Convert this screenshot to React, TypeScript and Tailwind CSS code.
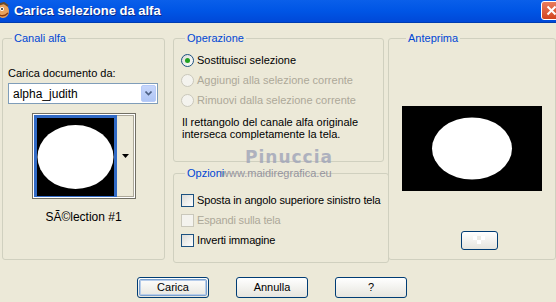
import { ReactNode } from 'react';

const Group = ({ title, className, children }: { title: string; className: string; children: ReactNode }) => (
  <fieldset className={`border border-[#D0D0BF] rounded-[3px] ${className}`}>
    <legend className="ml-[4px] px-[2px] text-[#0046D5] leading-[14px]">{title}</legend>
    {children}
  </fieldset>
);

const Radio = ({ label, checked, disabled }: { label: string; checked?: boolean; disabled?: boolean }) => (
  <div className="flex items-center h-[20px] whitespace-nowrap">
    <span
      className={`w-[13px] h-[13px] rounded-full border flex items-center justify-center ${
        disabled ? 'border-[#CAC8BB] bg-[#F4F3EE]' : 'border-[#1C5180] bg-gradient-to-br from-[#DCDCD7] to-white'
      }`}
    >
      {checked && <span className="w-[5px] h-[5px] rounded-full bg-[#21A121]" />}
    </span>
    <span className={`ml-[3px] ${disabled ? 'text-[#ACA899]' : 'text-black'}`}>{label}</span>
  </div>
);

const Check = ({ label, disabled }: { label: string; disabled?: boolean }) => (
  <div className="flex items-center h-[20px] whitespace-nowrap">
    <span
      className={`w-[13px] h-[13px] shrink-0 border ${
        disabled ? 'border-[#CAC8BB] bg-[#F4F3EE]' : 'border-[#1C5180] bg-gradient-to-br from-[#DCDCD7] to-white'
      }`}
    />
    <span className={`ml-[3px] tracking-[-0.15px] ${disabled ? 'text-[#ACA899]' : 'text-black'}`}>{label}</span>
  </div>
);

const XpButton = ({ label, focused }: { label: string; focused?: boolean }) => (
  <button className="w-[72px] h-[21px] rounded-[3px] border border-[#003C74] bg-gradient-to-b from-white to-[#E6E5DE] p-[1px]">
    <span
      className={`flex items-center justify-center w-full h-full rounded-[2px] ${
        focused ? 'border border-[#7DA2CE] shadow-[inset_0_0_0_1px_#B6CCEA]' : ''
      }`}
    >
      {label}
    </span>
  </button>
);

const Ellipse = ({ w, h, rx, ry }: { w: number; h: number; rx: number; ry: number }) => (
  <svg width={w} height={h} viewBox={`0 0 ${w} ${h}`} className="block">
    <rect width={w} height={h} fill="#000" />
    <ellipse cx={w / 2} cy={h / 2} rx={rx} ry={ry} fill="#fff" />
  </svg>
);

export default function App() {
  return (
    <div className="relative w-[556px] h-[302px] overflow-hidden bg-[#ECE9D8] text-[11px] text-black font-['Liberation_Sans',Arial,sans-serif]">
      {/* title bar */}
      <div className="h-[23px] flex items-center bg-gradient-to-b from-[#0A5FEA] via-[#0055E5] to-[#0048D8] border-b border-[#003CB0]">
        <svg width="12" height="18" viewBox="0 0 12 18" className="ml-[-2px]">
          <ellipse cx="5" cy="9" rx="6" ry="7" fill="#E9A25C" />
          <ellipse cx="4" cy="7" rx="2" ry="2" fill="#fff" />
          <circle cx="4" cy="7" r="1" fill="#222" />
          <path d="M0 12 Q5 16 10 11" stroke="#8A3A10" strokeWidth="1.5" fill="none" />
          <path d="M-1 3 L6 1 L10 4" stroke="#6B4A2A" strokeWidth="2" fill="none" />
        </svg>
        <span className="ml-[4px] text-white font-bold text-[13px] [text-shadow:1px_1px_0_#0A2A8A]">
          Carica selezione da alfa
        </span>
        <div className="ml-auto mr-[-6px] w-[21px] h-[19px] mt-[-2px] rounded-[3px] border border-white bg-gradient-to-b from-[#E97B5C] to-[#D2431C] flex items-center justify-center">
          <svg width="11" height="11" viewBox="0 0 11 11">
            <path d="M1.5 1.5 L9.5 9.5 M9.5 1.5 L1.5 9.5" stroke="#fff" strokeWidth="2" />
          </svg>
        </div>
      </div>

      {/* groups */}
      <div className="flex pt-[8px] pl-[2px]">
        <Group title="Canali alfa" className="w-[164px] h-[229px] px-[5px]">
          <div className="mt-[21px] leading-[14px]">Carica documento da:</div>
          <div className="mt-[3px] w-[150px] h-[21px] border border-[#7F9DB9] bg-white flex items-center">
            <span className="ml-[4px] flex-1 text-[12px]">alpha_judith</span>
            <span className="w-[15px] h-[17px] mr-[1px] rounded-[2px] bg-gradient-to-b from-[#C6D6FB] to-[#B0C6F5] border border-[#B7CBF8] flex items-center justify-center">
              <svg width="7" height="5" viewBox="0 0 7 5">
                <path d="M0.5 0.5 L3.5 3.5 L6.5 0.5" stroke="#4D6185" strokeWidth="1.6" fill="none" />
              </svg>
            </span>
          </div>
          <div className="mt-[9px] ml-[24px] w-[104px] h-[86px] border border-[#716F64] bg-white flex p-[1px]">
            <div className="border-[3px] border-[#316AC5] w-[83px]">
              <Ellipse w={77} h={78} rx={38} ry={32} />
            </div>
            <div className="flex-1 bg-[#ECE9D8] border border-l-0 border-[#ACA899] flex items-center justify-center">
              <svg width="7" height="4" viewBox="0 0 7 4">
                <path d="M0 0 L7 0 L3.5 4 Z" fill="#000" />
              </svg>
            </div>
          </div>
          <div className="mt-[11px] text-center leading-[14px] text-[12px]">SÃ©lection #1</div>
        </Group>

        <div className="ml-[8px] w-[211px] flex flex-col gap-[4px]">
          <Group title="Operazione" className="h-[131px] px-[7px]">
            <div className="mt-[5px]">
              <Radio label="Sostituisci selezione" checked />
              <Radio label="Aggiungi alla selezione corrente" disabled />
              <Radio label="Rimuovi dalla selezione corrente" disabled />
            </div>
            <p className="mt-[6px] ml-[1px] leading-[12px]">
              Il rettangolo del canale alfa originale
              <br />
              interseca completamente la tela.
            </p>
          </Group>
          <Group title="Opzioni" className="h-[97px] px-[7px]">
            <div className="mt-[10px]">
              <Check label="Sposta in angolo superiore sinistro tela" />
              <Check label="Espandi sulla tela" disabled />
              <Check label="Inverti immagine" />
            </div>
          </Group>
        </div>

        <Group title="Anteprima" className="ml-[4px] w-[165px] h-[229px] px-[13px]">
          <div className="mt-[61px]">
            <Ellipse w={140} h={85} rx={40} ry={31} />
          </div>
          <div className="mt-[40px] ml-[59px] w-[37px] h-[19px] rounded-[3px] border border-[#003C74] bg-gradient-to-b from-white to-[#E6E5DE] flex items-center justify-center">
            <svg width="14" height="10" viewBox="0 0 14 10">
              <rect x="0" y="0" width="4" height="4" fill="#fff" />
              <rect x="8" y="0" width="4" height="4" fill="#fff" />
              <rect x="4" y="4" width="4" height="4" fill="#fff" />
              <rect x="4" y="0" width="4" height="4" fill="#ECEBE5" />
            </svg>
          </div>
        </Group>
      </div>

      {/* buttons */}
      <div className="flex gap-[27px] pl-[137px] mt-[14px]">
        <XpButton label="Carica" focused />
        <XpButton label="Annulla" />
        <XpButton label="?" />
      </div>

      {/* watermarks */}
      <div className="absolute left-[245px] top-[145px] text-[17px] font-bold text-[#9A9FB6] opacity-75 font-['DejaVu_Sans',sans-serif] tracking-[1px]">
        Pinuccia
      </div>
      <div className="absolute left-[221px] top-[165px] text-[11px] text-[#8C8C9A] opacity-90">
        www.maidiregrafica.eu
      </div>
    </div>
  );
}
